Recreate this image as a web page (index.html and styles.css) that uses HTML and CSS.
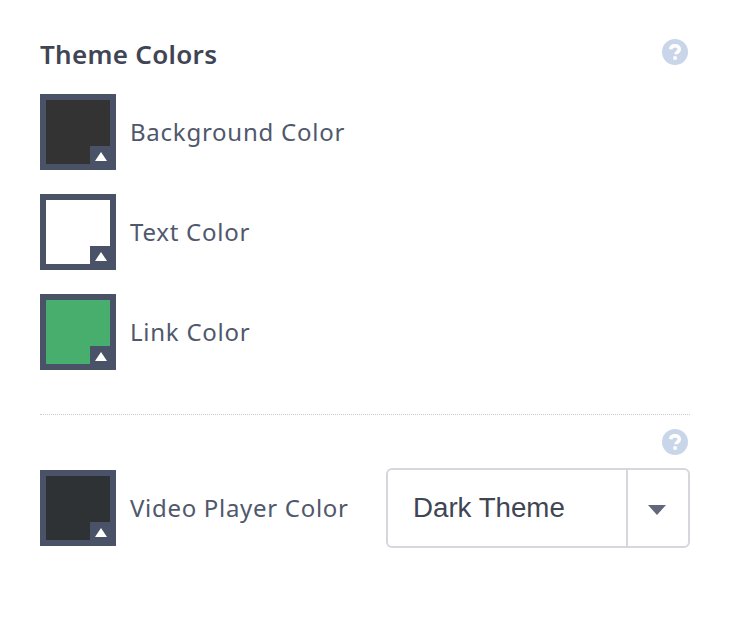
FILE: index.html
```html
<!DOCTYPE html>
<html lang="en">
<head>
<meta charset="utf-8">
<title>Theme Colors</title>
<link rel="stylesheet" href="styles.css">
</head>
<body>
<main class="panel">
  <header class="head">
    <h2 class="title">Theme Colors</h2>
    <svg class="help" viewBox="0 0 26 26" aria-hidden="true"><circle cx="13" cy="13" r="13" fill="#c9d5e9"/><path d="M8.6 10.2c.3-2.300 2-3.500 4.400-3.500 2.500 0 4.300 1.400 4.300 3.500 0 2.900-3.300 2.900-3.300 5.100" fill="none" stroke="#fff" stroke-width="3.500"/><rect x="11.300" y="17.300" width="3.500" height="3.400" rx=".5" fill="#fff"/></svg>
  </header>
  <div class="rows">
    <div class="row">
      <div class="swatch swatch-bg"><span class="corner"></span></div>
      <span class="label">Background Color</span>
    </div>
    <div class="row">
      <div class="swatch swatch-text"><span class="corner"></span></div>
      <span class="label">Text Color</span>
    </div>
    <div class="row">
      <div class="swatch swatch-link"><span class="corner"></span></div>
      <span class="label">Link Color</span>
    </div>
  </div>
  <hr class="divider">
  <div class="help-line">
    <svg class="help" viewBox="0 0 26 26" aria-hidden="true"><circle cx="13" cy="13" r="13" fill="#c9d5e9"/><path d="M8.6 10.2c.3-2.300 2-3.500 4.400-3.500 2.500 0 4.300 1.400 4.300 3.500 0 2.900-3.300 2.900-3.300 5.100" fill="none" stroke="#fff" stroke-width="3.500"/><rect x="11.300" y="17.300" width="3.500" height="3.400" rx=".5" fill="#fff"/></svg>
  </div>
  <div class="row player">
    <div class="swatch swatch-video"><span class="corner"></span></div>
    <span class="label label-video">Video Player Color</span>
    <div class="select">
      <span class="select-value">Dark Theme</span>
      <span class="select-arrow"></span>
    </div>
  </div>
</main>
</body>
</html>
```
FILE: styles.css
```css
* { box-sizing: border-box; }
html, body { margin: 0; background: #fff; }
body { font-family: "Noto Sans", "Open Sans", sans-serif; color: #50586c; }
.panel { width: 730px; height: 618px; padding: 35px 40px 0; overflow: hidden; }
.head { display: flex; justify-content: space-between; align-items: flex-start; height: 59px; padding-right: 2px; }
.help { width: 26px; height: 26px; display: block; margin-top: 4px; }
.title { margin: 0; font-size: 26px; line-height: 38px; font-weight: 600; letter-spacing: .3px; color: #3f4554; }
.rows { display: flex; flex-direction: column; gap: 24px; }
.row { display: flex; align-items: center; }
.swatch { position: relative; width: 76px; height: 76px; border: 6px solid #4a5268; flex: none; }
.swatch-bg { background: #333333; }
.swatch-text { background: #ffffff; }
.swatch-link { background: #48ae6e; }
.swatch-video { background: #2e3235; }
.corner { position: absolute; right: -6px; bottom: -6px; width: 26px; height: 24px; background: #4a5268; }
.corner::after { content: ""; position: absolute; left: 5px; top: 6px; border-left: 6.500px solid transparent; border-right: 6.500px solid transparent; border-bottom: 9px solid #fff; }
.label { margin-left: 14px; font-size: 24px; line-height: 34px; letter-spacing: .75px; }
.divider { height: 0; margin: 44px 0 0; border: 0; border-top: 1px dotted #c9ccd3; }
.help-line { display: flex; justify-content: flex-end; height: 53px; padding: 10px 2px 0 0; }
.help-line .help { margin-top: 4px; }
.player { align-items: center; }
.label-video { width: 256px; flex: none; letter-spacing: .7px; }
.select { display: flex; width: 304px; height: 80px; border: 2px solid #d5d7dc; border-radius: 6px; align-items: stretch; }
.select-value { flex: 1; padding-left: 25px; font-family: "Liberation Sans", Arial, sans-serif; font-size: 27.700px; line-height: 75px; color: #3f4554; }
.select-arrow { position: relative; width: 62px; border-left: 2px solid #d5d7dc; }
.select-arrow::after { content: ""; position: absolute; left: 20px; top: 35px; border-left: 9px solid transparent; border-right: 9px solid transparent; border-top: 10px solid #62687a; }
```
